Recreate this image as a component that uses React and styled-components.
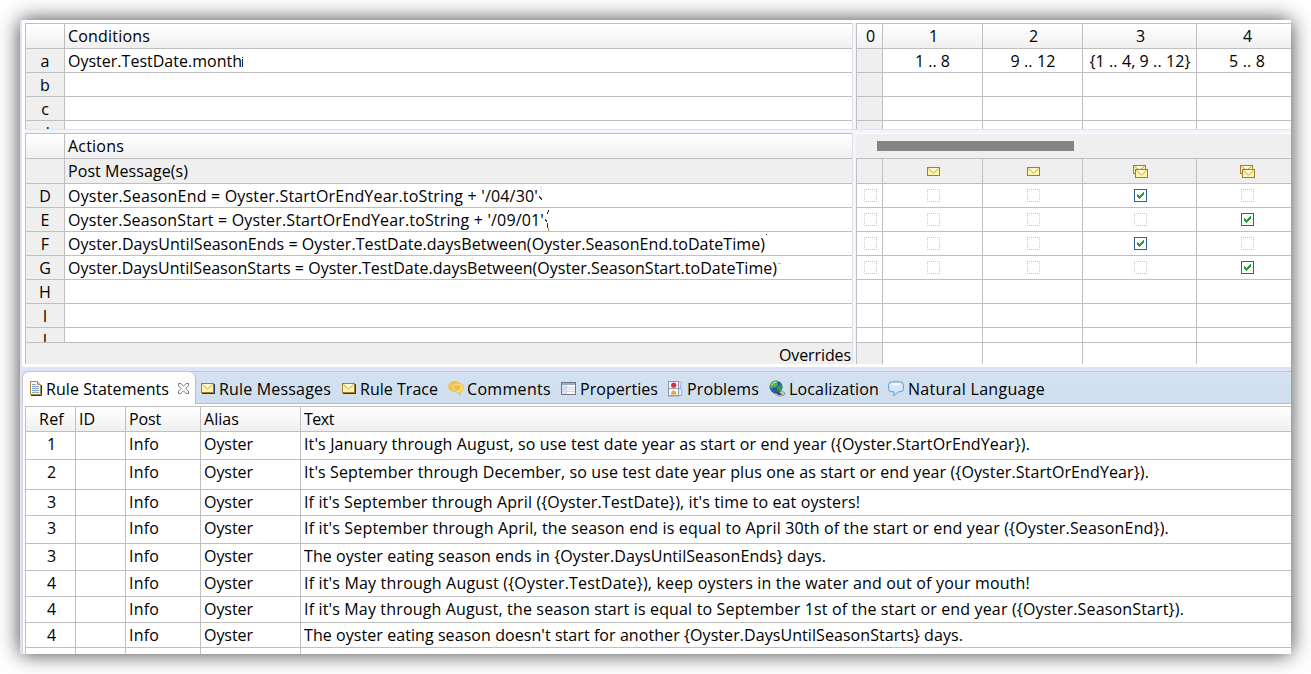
import React, { useLayoutEffect, useRef, useState } from 'react';
import styled, { createGlobalStyle, css } from 'styled-components';

const LINE = '#bfbfbf';

const Global = createGlobalStyle`
  html, body { margin: 0; background: #fff; overflow: hidden; }
  * { box-sizing: border-box; }
  body { font: 16px/24px "Open Sans", "Noto Sans", sans-serif; color: #000; }
`;
const Page = styled.div`
  width: 1311px; height: 674px; padding: 20px; overflow: hidden;
`;
const Window = styled.div`
  width: 1271px; height: 634px; background: #fff; display: flex; flex-direction: column;
  border-left: 2px solid #dfe3f5;
  box-shadow: 0 0 20px rgba(0,0,0,.75);
`;
const Clip = styled.div`
  overflow: hidden; flex: 1; min-height: 0; display: flex; flex-direction: column;
`;
const Panes = styled.div`
  display: flex; flex: none; height: ${p => p.$h}px; padding-left: 3px; margin-top: ${p => p.$mt || 0}px;
`;
const LeftPane = styled.div`
  width: 828px; flex: none; height: 100%; overflow: hidden; border-right: 1px solid #dfe1e8;
`;
const Gutter = styled.div`width: 3px; flex: none; background: #f3f4fc;`;
const RightPane = styled.div`flex: 1; min-width: 0; height: 100%; overflow: hidden;`;
const SashH = styled.div`
  height: 4px; flex: none; margin-left: 3px; background: #f3f4fc; border-top: 1px solid #dfe3ea;
`;
const Row = styled.div`
  display: grid; grid-template-columns: ${p => p.$cols}; height: ${p => p.$h}px; overflow: hidden;
  border-top: 1px solid ${LINE}; border-left: 1px solid ${LINE};
  ${p => p.$head && css`background: linear-gradient(#fff, #f0f0f0);`}
  ${p => p.$gray && css`background: #efefef;`}
`;
const LEFT = '39px 1fr';
const RIGHT = '26px 100px 100px 114px 1fr';
const TABLE = '50px 50px 75px 100px 1fr';
const Cell = styled.div`
  display: flex; align-items: center; white-space: nowrap; min-width: 0; height: 100%;
  padding: ${p => p.$pad || '0 0 0 3px'};
  justify-content: ${p => (p.$center ? 'center' : p.$end ? 'flex-end' : 'flex-start')};
  background: ${p => (p.$gray ? '#efefef' : 'transparent')};
  border-right: 1px solid ${LINE};
  &:last-child { border-right-color: transparent; }
`;
const TopCell = styled(Cell)`align-items: flex-start; line-height: 25px;`;
const Track = styled.div`
  height: 25px; background: #efefef; border-top: 1px solid #fff; padding: 7px 0 0 21px;
`;
const Thumb = styled.div`width: 197px; height: 10px; background: #848484;`;
const Box = styled.svg`display: block; flex: none;`;
const TabsBand = styled.div`
  margin-top: 3px; height: 37px; flex: none; background: #dfe3f5; padding-top: 4px;
`;
const Tabs = styled.div`
  height: 33px; display: flex; border-top: 1px solid #c4c6cc; border-bottom: 1px solid #b2bdd2;
  border-left: 1px solid #c4c6cc; border-top-left-radius: 6px;
  background: linear-gradient(#d4e1f0, #cfdeee);
`;
const Tab = styled.div`
  flex: none; width: ${p => p.$w}px; height: 31px; display: flex; align-items: center;
  padding-left: ${p => p.$pl}px; gap: ${p => p.$gap}px; padding-top: 2px;
  ${p => p.$active && css`
    height: 32px; background: #fff; border-right: 1px solid #b2bdd2; border-radius: 6px 7px 0 0; padding-bottom: 1px;
  `}
`;
const CloseButton = styled.span`margin: 0 0 1px 5px;`;
const BottomBody = styled.div`
  flex: 1; min-height: 0; overflow: hidden; padding: 2px 0 0 2px; border-left: 1px solid #d3d5dc;
`;
const Label = styled.span`display: inline-block; white-space: nowrap; flex: none;`;

// Spaces the letters so that the text takes exactly `w` pixels.
function Fit({ w, children }) {
  const ref = useRef(null);
  const [ls, setLs] = useState(0);
  useLayoutEffect(() => {
    const el = ref.current;
    el.style.letterSpacing = '0px';
    const d = (w - el.getBoundingClientRect().width) / children.length;
    el.style.letterSpacing = d + 'px';
    setLs(d);
  }, [w, children]);
  return <Label ref={ref} style={{ letterSpacing: ls }}>{children}</Label>;
}

const Envelope = ({ shadow }) => (
  <Box width={shadow ? 14 : 13} height={shadow ? 11 : 9} viewBox={shadow ? '0 0 14 11' : '0 0 13 9'} shapeRendering="crispEdges">
    {shadow && <path d="M1 10.500h13M13.500 1v10" fill="none" stroke="#24356e" />}
    <rect x=".5" y=".5" width="12" height={shadow ? 9 : 8} fill="#fff6a8" stroke="#a37c2c" />
    <path d="M1.500 1.500 6.500 6 11.500 1.500" fill="#fffde8" stroke="#c89b4a" shapeRendering="auto" />
  </Box>
);
const Envelopes = () => (
  <Box width="15" height="13" viewBox="0 0 15 13" shapeRendering="crispEdges">
    <rect x=".5" y=".5" width="12" height="8" fill="#fff6a8" stroke="#a37c2c" />
    <path d="M1.500 1.500 6.500 5 11.500 1.500" fill="#fffde8" stroke="#c89b4a" shapeRendering="auto" />
    <rect x="2.500" y="4.500" width="12" height="8" fill="#fff6a8" stroke="#a37c2c" />
    <path d="M3.500 5.500 8.500 10 13.500 5.500" fill="#fffde8" stroke="#c89b4a" shapeRendering="auto" />
  </Box>
);
const Check = ({ on }) => (
  <Box width="13" height="13" viewBox="0 0 13 13" shapeRendering="crispEdges">
    <rect x=".5" y=".5" width="12" height="12" fill="#fff" stroke={on ? '#2f6299' : '#c8c8c8'} strokeDasharray={on ? undefined : '1 1'} strokeDashoffset={on ? 0 : .5} />
    {on && <path d="M3 5h1v1h1v1h1v-1h1v-1h1v-1h1v-1h1v3h-1v1h-1v1h-1v1h-1v1h-1v-1h-1v-1h-1z" fill="#2f9a35" />}
  </Box>
);
const DocIcon = () => (
  <Box width="12" height="15" viewBox="0 0 12 15">
    <path d="M11.500 4v10.500H1" fill="none" stroke="#24356e" />
    <path d="M.5.5h7l3 3v10H.5z" fill="#f4f9ff" stroke="#a98a3c" />
    <path d="M7.500.5v3h3" fill="#f0d98a" stroke="#a98a3c" />
    <path d="M2 3.500h4M2 5.500h7M2 7.500h7M2 9.500h7M2 11.500h7" stroke="#7d9cc8" />
    <path d="M5.500 3v9" stroke="#b9cbe4" />
  </Box>
);
const CloseIcon = () => (
  <Box width="11" height="11" viewBox="0 0 11 11">
    <path d="M.5.5h2.300L5.500 3.200 8.200.5h2.300v2.300L7.800 5.500l2.700 2.700v2.300H8.200L5.500 7.800l-2.700 2.700H.5V8.200l2.700-2.700L.5 2.800z" fill="#fff" stroke="#666" strokeWidth=".9" />
  </Box>
);
const CommentIcon = () => (
  <Box width="16" height="15" viewBox="0 0 16 15">
    <ellipse cx="6.500" cy="5.500" rx="6" ry="5" fill="#f3c64c" stroke="#e8b840" strokeWidth=".6" />
    <path d="M3.800 6.500c0-3 2.500-4.500 6-4.500s5.700 1.800 5.700 4.600-2 4.200-3.700 4.400l.4 3.300-3.400-3.200C5.800 10.800 3.800 9 3.800 6.500z" fill="#fcdc70" stroke="#e8b23c" strokeWidth=".7" />
    <path d="M6 5.200h6.500M6 6.900h6.500M6.500 8.600h4.500" stroke="#cf942c" strokeWidth=".7" />
  </Box>
);
const PropsIcon = () => (
  <Box width="15" height="13" viewBox="0 0 15 13" shapeRendering="crispEdges">
    <rect x=".5" y=".5" width="14" height="12" fill="#fff" stroke="#6f7684" />
    <path d="M1 1h13v2H1z" fill="#9aabca" />
    <path d="M1 3h4v9H1z" fill="#dce5f2" />
    <path d="M5.500 3v9M1 5.500h13M1 7.500h13M1 9.500h13" stroke="#ccd5e2" />
  </Box>
);
const ProblemsIcon = () => (
  <Box width="15" height="16" viewBox="0 0 15 16">
    <path d="M10.500 1h3.200l-1 3v3l1 2v5.500h-3.200" fill="#e3edf7" stroke="#9fb2cc" />
    <rect x=".5" y=".5" width="10" height="14.500" fill="#f7f9fc" stroke="#8497b4" />
    <path d="M1 7.500h12M1 14.500h13" stroke="#8fa3c4" />
    <circle cx="5.700" cy="4.200" r="2.600" fill="#dd3038" />
    <path d="M3 13.500c0-5.500 5.500-5.500 5.500 0z" fill="#f5a524" />
  </Box>
);
const GlobeIcon = () => (
  <Box width="17" height="17" viewBox="0 0 17 17">
    <path d="M4 12.500l7.500-2.500 4.500 3-1 2.300-5 1z" fill="#c6ced6" stroke="#77838f" strokeWidth=".8" />
    <circle cx="7" cy="7" r="6.500" fill="#1f5fae" />
    <path d="M1.500 4C3.500.8 8 0 10 1.200L8 3l1 2-3 2.500L4 7 2.500 9 .8 7z" fill="#58b54a" />
    <path d="M8 7l4-2.500 1.500 3-2 4-3-1z" fill="#3a9a40" />
    <path d="M2.800 5c1-2 2.500-3 4.500-3" stroke="#d5f3c0" fill="none" />
    <path d="M6 11.500l4.500 1 3 2-4 .5z" fill="#33414e" />
  </Box>
);
const BubbleIcon = () => (
  <Box width="16" height="16" viewBox="0 0 16 16">
    <path d="M4 .8h8a3.500 3.500 0 0 1 3.500 3.500v3A3.500 3.500 0 0 1 12 10.800h-1.500L5.800 14.800l.2-4H4A3.500 3.500 0 0 1 .5 7.300v-3A3.500 3.500 0 0 1 4 .8z" fill="#cfeaff" stroke="#5f9dd0" />
    <path d="M4 3.200h8" stroke="#f2faff" strokeWidth="2" strokeLinecap="round" />
  </Box>
);

// Remains of characters cut off behind an expression.
const REMNANTS = {
  a: <path d="M0 9h1v8h-1zM0 7h1v1h-1z" fill="#1d1d1d" />,
  D: <><path d="M2 1h2v6h-2z" fill="#efefef" /><path d="M1 11h1v1h1v1h1v2h-1v-1h-1v-1h-1z" fill="#333" /><path d="M2 22h2v1h-2z" fill="#f0b060" /></>,
  E: <><path d="M4 1h1v2h-1v2h-1v-2h1z" fill="#222" /><path d="M1 10h1v1h1v2h-1v-1h-1zM3 14h1v5h-1z" fill="#333" /><path d="M4 19h1v3h-1z" fill="#c9822f" /></>,
  F: <path d="M1 1h1v1h-1z" fill="#222" />,
  G: <path d="M1 6h3v1h-3z" fill="#bbb" />,
};
const Remnant = ({ k }) => (REMNANTS[k] ? (
  <Box width="6" height="23" viewBox="0 0 6 23" shapeRendering="crispEdges">{REMNANTS[k]}</Box>
) : null);

const conditions = [['a', 'Oyster.TestDate.month'], ['b'], ['c'], ['d']];
const condCells = [['1 .. 8', 35, 0], ['9 .. 12', 45, 1], ['{1 .. 4, 9 .. 12}', 101, 1], ['5 .. 8', 36, 7]];
const actions = [
  ['D', "Oyster.SeasonEnd = Oyster.StartOrEndYear.toString + '/04/30'", 470, 3],
  ['E', "Oyster.SeasonStart = Oyster.StartOrEndYear.toString + '/09/01'", 476, 4],
  ['F', 'Oyster.DaysUntilSeasonEnds = Oyster.TestDate.daysBetween(Oyster.SeasonEnd.toDateTime)', 697, 3],
  ['G', 'Oyster.DaysUntilSeasonStarts = Oyster.TestDate.daysBetween(Oyster.SeasonStart.toDateTime)', 709, 4],
  ['H'], ['I'], ['J'],
];
const statements = [
  ['1', "It's January through August, so use test date year as start or end year ({Oyster.StartOrEndYear}).", 726, 28],
  ['2', "It's September through December, so use test date year plus one as start or end year ({Oyster.StartOrEndYear}).", 845, 30],
  ['3', "If it's September through April ({Oyster.TestDate}), it's time to eat oysters!", 556, 26],
  ['3', "If it's September through April, the season end is equal to April 30th of the start or end year ({Oyster.SeasonEnd}).", 865, 28],
  ['3', 'The oyster eating season ends in {Oyster.DaysUntilSeasonEnds} days.', 522, 27],
  ['4', "If it's May through August ({Oyster.TestDate}), keep oysters in the water and out of your mouth!", 726, 26],
  ['4', "If it's May through August, the season start is equal to September 1st of the start or end year ({Oyster.SeasonStart}).", 880, 26],
  ['4', "The oyster eating season doesn't start for another {Oyster.DaysUntilSeasonStarts} days.", 659, 25],
];
const tabs = [
  ['Rule Messages', 112, 141, <Envelope shadow />, 5, 4],
  ['Rule Trace', 78, 107, <Envelope shadow />, 5, 4],
  ['Comments', 84, 113, <CommentIcon />, 4, 3],
  ['Properties', 78, 106, <PropsIcon />, 4, 4],
  ['Problems', 72, 101, <ProblemsIcon />, 5, 4],
  ['Localization', 90, 119, <GlobeIcon />, 5, 3],
  ['Natural Language', 137, 170, <BubbleIcon />, 5, 4],
];

export default function App() {
  return (
    <Page>
      <Global />
      <Window>
        <Clip>
          <Panes $h={106} $mt={3}>
            <LeftPane>
              <Row $cols={LEFT} $h={25} $head><Cell /><Cell><Fit w={82}>Conditions</Fit></Cell></Row>
              {conditions.map(([k, t]) => (
                <Row key={k} $cols={LEFT} $h={24}>
                  <Cell $gray $center $pad="0">{k}</Cell>
                  <Cell>{t && <><Fit w={174}>{t}</Fit><Remnant k={k} /></>}</Cell>
                </Row>
              ))}
            </LeftPane>
            <Gutter />
            <RightPane>
              <Row $cols={RIGHT} $h={25} $head>
                {['0', '1', '2', '3', '4'].map(n => <Cell key={n} $center $pad={n === '4' ? '0 0 0 8px' : '0 0 0 2px'}>{n}</Cell>)}
              </Row>
              {[0, 1, 2, 3].map(r => (
                <Row key={r} $cols={RIGHT} $h={24}>
                  <Cell $gray />
                  {condCells.map(([t, w, pad]) => <Cell key={t} $center $pad={`0 0 0 ${pad}px`}>{r === 0 && <Fit w={w}>{t}</Fit>}</Cell>)}
                </Row>
              ))}
            </RightPane>
          </Panes>
          <SashH />
          <Panes $h={231}>
            <LeftPane>
              <Row $cols={LEFT} $h={25} $head><Cell /><Cell><Fit w={56}>Actions</Fit></Cell></Row>
              <Row $cols={LEFT} $h={25} $gray><Cell /><Cell><Fit w={120}>Post Message(s)</Fit></Cell></Row>
              {actions.map(([k, t, w]) => (
                <Row key={k} $cols={LEFT} $h={k === 'J' ? 15 : 24}>
                  <Cell $gray $center $pad="0">{k}</Cell>
                  <Cell>{t && <><Fit w={w}>{t}</Fit><Remnant k={k} /></>}</Cell>
                </Row>
              ))}
              <Row $cols="1fr" $h={22} $gray><Cell $end $pad="0 0 0 0"><Fit w={72}>Overrides</Fit></Cell></Row>
            </LeftPane>
            <Gutter />
            <RightPane>
              <Track><Thumb /></Track>
              <Row $cols={RIGHT} $h={25} $gray>
                <Cell />
                <Cell $center $pad="0 0 0 1px"><Envelope /></Cell>
                <Cell $center $pad="0 0 0 1px"><Envelope /></Cell>
                <Cell $center $pad="0 0 0 2px"><Envelopes /></Cell>
                <Cell $center $pad="0 0 0 8px"><Envelopes /></Cell>
              </Row>
              {actions.map(([k, t, w, on]) => (
                <Row key={k} $cols={RIGHT} $h={k === 'J' ? 15 : 24}>
                  {[0, 1, 2, 3, 4].map(c => (
                    <Cell key={c} $center $pad={c === 4 ? '0 0 0 7px' : c === 0 ? '0 0 0 2px' : '0 0 0 1px'}>{t && <Check on={on === c} />}</Cell>
                  ))}
                </Row>
              ))}
              <Row $cols={RIGHT} $h={22}><Cell $gray /><Cell /><Cell /><Cell /><Cell /></Row>
            </RightPane>
          </Panes>
          <TabsBand>
            <Tabs>
              <Tab $active $w={173} $pl={7} $gap={4}>
                <DocIcon /><Fit w={123}>Rule Statements</Fit><CloseButton><CloseIcon /></CloseButton>
              </Tab>
              {tabs.map(([t, tw, w, icon, pl, gap]) => (
                <Tab key={t} $w={w} $pl={pl} $gap={gap}>{icon}<Fit w={tw}>{t}</Fit></Tab>
              ))}
            </Tabs>
          </TabsBand>
          <BottomBody>
            <Row $cols={TABLE} $h={25} $head>
              <Cell $center $pad="0 0 0 2px"><Fit w={25}>Ref</Fit></Cell>
              <Cell>ID</Cell>
              <Cell><Fit w={32}>Post</Fit></Cell>
              <Cell><Fit w={35}>Alias</Fit></Cell>
              <Cell><Fit w={30}>Text</Fit></Cell>
            </Row>
            {statements.map(([n, t, w, h], i) => (
              <Row key={i} $cols={TABLE} $h={h}>
                <TopCell $center $pad="0 0 0 2px">{n}</TopCell>
                <TopCell />
                <TopCell><Fit w={30}>Info</Fit></TopCell>
                <TopCell><Fit w={49}>Oyster</Fit></TopCell>
                <TopCell><Fit w={w}>{t}</Fit></TopCell>
              </Row>
            ))}
            <Row $cols={TABLE} $h={8}><Cell /><Cell /><Cell /><Cell /><Cell /></Row>
          </BottomBody>
        </Clip>
      </Window>
    </Page>
  );
}
